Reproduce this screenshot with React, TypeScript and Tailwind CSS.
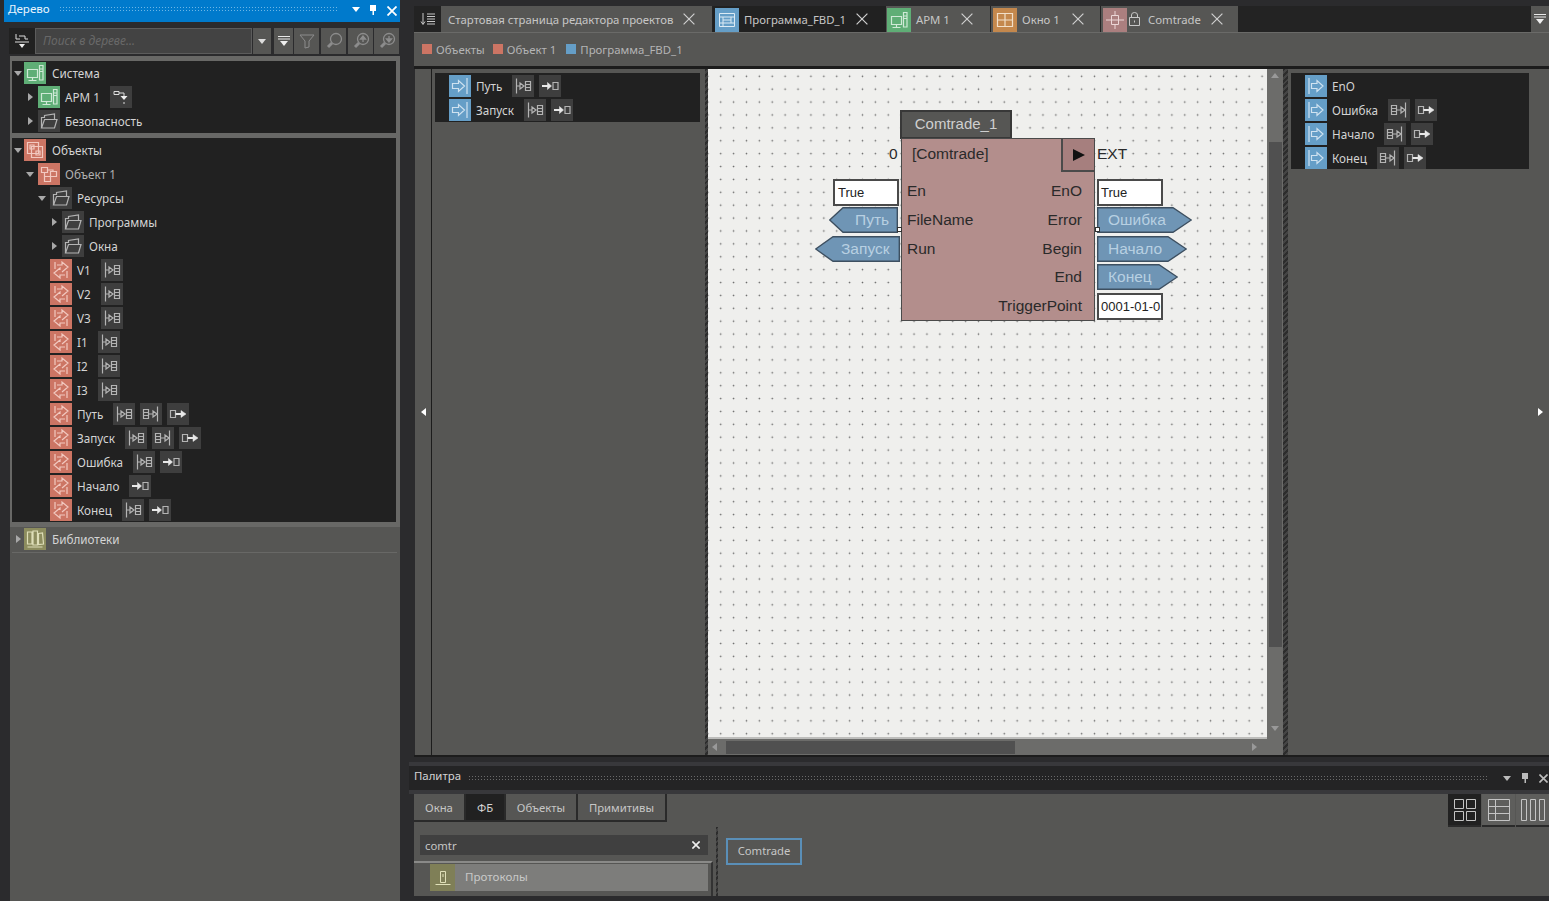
import React from "react";

const P = ({ c = "#b4b4b4", w = 1.2, children, s = 22 }: { c?: string; w?: number; children: React.ReactNode; s?: number }) => (
  <svg width={s} height={s} viewBox="0 0 22 22" fill="none" stroke={c} strokeWidth={w}>{children}</svg>
);
const InTag = () => (<P><path d="M4.5 3.5v15M4.5 11H8M8 8l4 3-4 3zM13.5 6.5h5v9h-5zM13.5 9.5h5M13.5 12.5h5" /></P>);
const OutTag = () => (<P><path d="M17.5 3.5v15M9 11h4M13 8l4 3-4 3zM3.5 6.5h5v9h-5zM3.5 9.5h5M3.5 12.5h5" /></P>);
const ArrowBox = () => (<P><path d="M14 7.5h5v7h-5z" /><path d="M3 11h7" stroke="#e8e8e8" strokeWidth={2} /><path d="M8.5 7.5l4 3.5-4 3.5z" fill="#e8e8e8" stroke="#e8e8e8" strokeWidth={0.5} /></P>);
const BoxArrow = () => (<P><path d="M3.5 7.5h5v7h-5z" /><path d="M8.5 11h6" stroke="#e8e8e8" strokeWidth={2} /><path d="M14 7.5l5 3.5-5 3.5z" fill="#e8e8e8" stroke="#e8e8e8" strokeWidth={0.5} /></P>);
const Folder = () => (<P><path d="M3.5 18V7.5h3V5.5l10-1.500v5" /><path d="M3.5 18h13l2.500-8.500H6.500z" /></P>);
const VarI = () => (<P c="#f2c9c0"><path d="M5 3v7M7 6h5V3l6 5-6 5M17 12v7M15 16h-5v3l-6-5 6-5v2" /></P>);
const SysI = ({ c = "#cfe9d6" }: { c?: string }) => (<P c={c}><path d="M3.500 7.500h10v8h-10zM8.500 15.500v2.500M4.500 18.500h8M15.500 3.500h3.500v14.500h-3.500zM15.500 7h3.500M15.500 9.500h3.500" /></P>);
const ObjsI = () => (<P c="#f2c9c0"><path d="M3.500 3.500h11v11h-11zM7.500 7.500h11v11h-11zM6 6h4v4H6zM12 12h4v4h-4z" /></P>);
const ObjI = () => (<P c="#f2c9c0"><path d="M3.500 4.500h6v5h-6zM12.500 8.500h6v5h-6zM6.500 13.500h6v5h-6zM9.500 7h5.500v1.500M6.500 9.500v4" /></P>);
const LibI = () => (<P c="#dedeb8"><path d="M3.500 4h4.500v12H3.500zM9 3h4.500v14H9zM14.500 5.500l4-.5 1 11-5 .5zM3.500 19h15" /></P>);
const BlueIn = () => (<P c="#cfe2f0"><path d="M3.500 8.500h6v-3l6 5.500-6 5.500v-3h-6zM18 3v16" /></P>);
const BlueOut = () => (<P c="#cfe2f0"><path d="M4 3v16M6.500 8.500h5.500v-3l6 5.500-6 5.500v-3H6.500z" /></P>);
const Dn = ({ c = "#c8c8c8" }: { c?: string }) => (<svg width="8" height="5" viewBox="0 0 8 5"><path d="M0 0h8L4 5z" fill={c} /></svg>);
const Rt = ({ c = "#b8b8b8" }: { c?: string }) => (<svg width="5" height="8" viewBox="0 0 5 8"><path d="M0 0v8l5-4z" fill={c} /></svg>);
const Pin = ({ c = "#fff" }: { c?: string }) => (<svg width="8" height="10" viewBox="0 0 8 10"><path d="M1 0h6v6H5v4H3.500V6H1z" fill={c} /></svg>);
const Close = ({ c = "#fff", s = 10, w = 1.800 }: { c?: string; s?: number; w?: number }) => (<svg width={s} height={s} viewBox="0 0 10 10" stroke={c} strokeWidth={w}><path d="M0.500 0.500l9 9M9.500 0.500l-9 9" /></svg>);
const CollapseAll = () => (<svg width="14" height="12" viewBox="0 0 14 12"><path d="M1 1.500h12M1 4h12" stroke="#e8e8e8" strokeWidth="1.200" /><path d="M3 6h8L7 11z" fill="#eee" /></svg>);

const Chip = ({ children }: { children: React.ReactNode }) => (<div className="w-[22px] h-[22px] bg-[#3e3e3e] flex items-center justify-center shrink-0">{children}</div>);
const Ico = ({ bg, children }: { bg: string; children: React.ReactNode }) => (<div className={`w-[22px] h-[22px] flex items-center justify-center shrink-0 ${bg}`}>{children}</div>);

type RowProps = { indent: string; caret?: "d" | "r"; icon: React.ReactNode; label: string; chips?: React.ReactNode[]; dim?: boolean; top?: boolean };
const Row = ({ indent, caret, icon, label, chips = [], dim, top }: RowProps) => (
  <div className={`h-[24px] flex items-center ${indent}`}>
    <div className={`w-[12px] -ml-[12px] flex shrink-0 ${top ? "justify-center" : caret === "r" ? "justify-start pl-[2px]" : "justify-start"}`}>{caret === "d" ? <Dn c="#a8a8a8" /> : caret === "r" ? <Rt c="#a8a8a8" /> : null}</div>
    {icon}
    <span className={`${top ? "ml-[6px]" : "ml-[5px]"} pt-[2px] text-[11.7px] whitespace-nowrap ${dim ? "text-[#b0b0b0]" : "text-[#d4d4d4]"}`}>{label}</span>
    <div className="flex gap-[5px] ml-[10px]">{chips.map((c, i) => <Chip key={i}>{c}</Chip>)}</div>
  </div>
);
const red = (i: React.ReactNode) => <Ico bg="bg-[#cc7564]">{i}</Ico>;
const gray = (i: React.ReactNode) => <Ico bg="bg-[#3e3e3e]">{i}</Ico>;
const L3 = "pl-[38px]";

const TB = ({ children, bg = "bg-[#565654]", w }: { children: React.ReactNode; bg?: string; w: string }) => (
  <div className={`h-[26px] flex items-center justify-center shrink-0 ${bg} ${w}`}>{children}</div>
);

const Left = () => (
  <div className="w-[400px] shrink-0 flex flex-col">
    <div className="ml-[4px] h-[22px] bg-[#007acc] flex items-center text-[12px] text-[#e8f4fc]">
      <span className="ml-[4px] -mt-[4px] w-[41px] text-[11.6px] whitespace-nowrap">Дерево</span>
      <div className="ml-[10px] w-[278px] h-[7px] -mt-[3px] bg-[radial-gradient(#6db6e6_0.7px,transparent_0.9px)] bg-[length:3px_3px]" />
      <div className="ml-[15px] -mt-[3px]"><Dn c="#fff" /></div>
      <div className="ml-[9px] -mt-[3px]"><Pin /></div>
      <div className="ml-[10px]"><Close /></div>
    </div>
    <div className="flex mt-[6px] h-[26px] pl-[9px]">
      <TB w="w-[26px]" bg="bg-[#212121]"><svg width="16" height="16" viewBox="0 0 16 16" stroke="#ddd" fill="none"><path d="M2 1v5h4M5 3h6v3h3" /><path d="M1 9h14" /><path d="M5 11h6l-3 4z" fill="#eee" stroke="none" /></svg></TB>
      <div className="w-[217px] h-[26px] bg-[#434343] border border-[#5c5c5c] flex items-center pl-[7px] text-[12px] italic text-[#686868] shrink-0">Поиск в дереве...</div>
      <TB w="w-[18px] ml-[1px]"><Dn c="#ddd" /></TB>
      <TB w="w-[19px] ml-[3px]"><CollapseAll /></TB>
      <TB w="w-[25px] ml-[1px]"><svg width="16" height="16" viewBox="0 0 16 16" fill="none" stroke="#8c8c8c"><path d="M1 2h14L10 8v6l-4 1V8z" /></svg></TB>
      <TB w="w-[25px] ml-[2px]"><svg width="18" height="18" viewBox="0 0 18 18" fill="none" stroke="#8c8c8c" strokeWidth="1.300"><circle cx="11" cy="7" r="5.500" /><path d="M7 11l-4 4" strokeWidth="3" /></svg></TB>
      <TB w="w-[25px] ml-[2px]"><svg width="18" height="18" viewBox="0 0 18 18" fill="none" stroke="#8c8c8c" strokeWidth="1.300"><circle cx="11" cy="7" r="5.500" /><path d="M7 11l-4 4" strokeWidth="3" /><path d="M11 4l-2.500 3h5zM11 6v4" fill="#999" /></svg></TB>
      <TB w="w-[25px] ml-[1px]"><svg width="18" height="18" viewBox="0 0 18 18" fill="none" stroke="#8c8c8c" strokeWidth="1.300"><circle cx="11" cy="7" r="5.500" /><path d="M7 11l-4 4" strokeWidth="3" /><path d="M11 10l-2.500-3h5zM11 8V4" fill="#999" /></svg></TB>
    </div>
    <div className="mt-[2px] ml-[10px] flex-1 bg-[#565654] flex flex-col">
      <div className="bg-[#686866] pt-[5px] pl-[2px] pb-[5px] pr-[4px]">
        <div className="bg-[#212121] h-[72px]">
          <Row top indent="pl-[12px]" caret="d" icon={<Ico bg="bg-[#5fae76]"><SysI /></Ico>} label="Система" />
          <Row indent="pl-[26px]" caret="r" icon={<Ico bg="bg-[#5fae76]"><SysI /></Ico>} label="АРМ 1" chips={[<svg key="a" width="18" height="18" viewBox="0 0 18 18" fill="none" stroke="#ddd"><path d="M2 3.500h5v3H2zM7 5h5v3" /><path d="M8.500 8h7l-3.500 4z" fill="#eee" stroke="none" /><path d="M12 14v2" /></svg>]} />
          <Row indent="pl-[26px]" caret="r" icon={gray(<Folder />)} label="Безопасность" />
        </div>
        <div className="bg-[#212121] h-[384px] mt-[5px] overflow-hidden">
          <Row top indent="pl-[12px]" caret="d" icon={red(<ObjsI />)} label="Объекты" />
          <Row indent="pl-[26px]" caret="d" icon={red(<ObjI />)} label="Объект 1" dim />
          <Row indent={L3} caret="d" icon={gray(<Folder />)} label="Ресурсы" />
          <Row indent="pl-[50px]" caret="r" icon={gray(<Folder />)} label="Программы" />
          <Row indent="pl-[50px]" caret="r" icon={gray(<Folder />)} label="Окна" />
          <Row indent={L3} icon={red(<VarI />)} label="V1" chips={[<InTag key="a" />]} />
          <Row indent={L3} icon={red(<VarI />)} label="V2" chips={[<InTag key="a" />]} />
          <Row indent={L3} icon={red(<VarI />)} label="V3" chips={[<InTag key="a" />]} />
          <Row indent={L3} icon={red(<VarI />)} label="I1" chips={[<InTag key="a" />]} />
          <Row indent={L3} icon={red(<VarI />)} label="I2" chips={[<InTag key="a" />]} />
          <Row indent={L3} icon={red(<VarI />)} label="I3" chips={[<InTag key="a" />]} />
          <Row indent={L3} icon={red(<VarI />)} label="Путь" chips={[<InTag key="a" />, <OutTag key="b" />, <BoxArrow key="c" />]} />
          <Row indent={L3} icon={red(<VarI />)} label="Запуск" chips={[<InTag key="a" />, <OutTag key="b" />, <BoxArrow key="c" />]} />
          <Row indent={L3} icon={red(<VarI />)} label="Ошибка" chips={[<InTag key="a" />, <ArrowBox key="b" />]} />
          <Row indent={L3} icon={red(<VarI />)} label="Начало" chips={[<ArrowBox key="b" />]} />
          <Row indent={L3} icon={red(<VarI />)} label="Конец" chips={[<InTag key="a" />, <ArrowBox key="b" />]} />
        </div>
      </div>
      <div className="ml-[2px] mr-[3px] border-b border-[#686866] pb-[1px] -mt-[5px] pt-[5px]">
        <Row top indent="pl-[12px]" caret="r" icon={<Ico bg="bg-[#8c8c5e]"><LibI /></Ico>} label="Библиотеки" />
      </div>
    </div>
  </div>
);

const Tab = ({ icon, label, width, active, lock, mr = "mr-[17px]", iconMl = "ml-[2px]" }: { icon?: React.ReactNode; label: string; width: string; active?: boolean; lock?: boolean; mr?: string; iconMl?: string }) => (
  <div className={`h-[26px] flex items-center shrink-0 ${width} ${active ? "bg-[#212121]" : "bg-[#565654]"}`}>
    {icon ? <div className={`${iconMl} self-end`}>{icon}</div> : <div className="w-[7px]" />}
    {lock && <svg className="ml-[2px]" width="11" height="14" viewBox="0 0 11 14" fill="none" stroke="#c8c8c8"><path d="M.500 5.500h10v8H.500zM2.500 5.500V3a3 2.500 0 0 1 6 0v2.500M5.500 8.500v2" /></svg>}
    <span className={`${lock ? "ml-[8px]" : icon ? "ml-[5px]" : ""} pt-[2px] text-[11.35px] text-[#c6c6c6] whitespace-nowrap`}>{label}</span>
    <div className={`ml-auto ${mr}`}><Close c="#cfcfcf" s={12} w={1} /></div>
  </div>
);
const TabIco = ({ bg, children }: { bg: string; children: React.ReactNode }) => (<div className={`w-[24px] h-[24px] flex items-center justify-center ${bg}`}>{children}</div>);

const Crumb = ({ c, label, ml }: { c: string; label: string; ml: string }) => (
  <div className={`flex items-center ${ml}`}><div className={`w-[10px] h-[10px] ${c}`} /><span className="ml-[4px] text-[11.4px] text-[#b4b4b4] whitespace-nowrap">{label}</span></div>
);

const Box = ({ cls, text }: { cls: string; text: string }) => (
  <div className={`absolute h-[27px] bg-white border-2 border-[#4a4a4a] flex items-center text-[13px] text-[#222] overflow-hidden whitespace-nowrap ${cls}`}>{text}</div>
);
const Tag = ({ x, y, w, tip, left, label, textX }: { x: number; y: number; w: number; tip: number; left?: boolean; label: string; textX: number }) => {
  const pts = left
    ? `0.700,13 ${tip},0.700 ${w - 0.7},0.700 ${w - 0.7},25.300 ${tip},25.300`
    : `0.700,0.700 ${w - tip},0.700 ${w - 0.7},13 ${w - tip},25.300 0.700,25.300`;
  return (
    <svg className="absolute" style={{ left: x, top: y }} width={w} height={26}>
      <polygon points={pts} fill="#6f95b5" stroke="#3d4f60" strokeWidth="1.400" />
      <text x={textX} y={17.8} fontSize="15.500" fill="#b8d0e2" fontFamily="'Liberation Sans',Arial,sans-serif">{label}</text>
    </svg>
  );
};

const Canvas = () => (
  <div className="relative w-[559px] h-[670px] bg-[#efefed] bg-[radial-gradient(circle,#666_0.7px,transparent_1.1px)] bg-[length:12.9px_12.9px] bg-[position:6.25px_0.85px] border-b-2 border-[#bdbdbb] font-['Liberation_Sans',Arial,sans-serif] text-[15.5px] text-[#2a2a2a] overflow-hidden">
    <div className="absolute left-[192px] top-[41px] w-[112px] h-[29px] bg-[#565654] border-2 border-[#383838] flex items-center justify-center text-[15px] text-[#cfcfcf]">Comtrade_1</div>
    <div className="absolute left-[193px] top-[69px] w-[194px] h-[183px] bg-[#b38e8c] border border-[#4a4a4a]">
      <div className="absolute right-0 top-0 w-[33px] h-[33px] bg-[#a67f7e] border-l-2 border-b-2 border-[#4a4a4a] flex items-center justify-center">
        <svg width="12" height="12" viewBox="0 0 12 12"><path d="M0 0v12l12-6z" fill="#111" /></svg>
      </div>
      <span className="absolute left-[10px] top-[3px]">[Comtrade]</span>
      <span className="absolute left-[5px] top-[40px]">En</span>
      <span className="absolute left-[5px] top-[69px]">FileName</span>
      <span className="absolute left-[5px] top-[98px]">Run</span>
      <span className="absolute right-[12px] top-[40px]">EnO</span>
      <span className="absolute right-[12px] top-[69px]">Error</span>
      <span className="absolute right-[12px] top-[98px]">Begin</span>
      <span className="absolute right-[12px] top-[126px]">End</span>
      <span className="absolute right-[12px] top-[155px]">TriggerPoint</span>
    </div>
    <span className="absolute left-[181px] top-[73px]">0</span>
    <span className="absolute left-[389px] top-[73px]">EXT</span>
    <Box cls="left-[125px] top-[110px] w-[66px] pl-[3px]" text="True" />
    <Box cls="left-[389px] top-[110px] w-[66px] pl-[2px]" text="True" />
    <Box cls="left-[389px] top-[224px] w-[66px] pl-[2px]" text="0001-01-0" />
    <Tag x={121} y={138} w={69} tip={14} left label="Путь" textX={26} />
    <Tag x={107} y={167} w={85} tip={18} left label="Запуск" textX={26} />
    <Tag x={389} y={138} w={95} tip={19} label="Ошибка" textX={11} />
    <Tag x={389} y={167} w={90} tip={19} label="Начало" textX={11} />
    <Tag x={389} y={195} w={81} tip={19} label="Конец" textX={11} />
    <div className="absolute left-[189px] top-[158px] w-[5px] h-[5px] bg-white border border-[#333]" />
    <div className="absolute left-[387px] top-[158px] w-[5px] h-[5px] bg-white border border-[#333]" />
  </div>
);

const ListRow = ({ icon, label, chips = [] }: { icon: React.ReactNode; label: string; chips?: React.ReactNode[] }) => (
  <div className="h-[24px] flex items-center pl-[14px]">
    <Ico bg="bg-[#659ec7]">{icon}</Ico>
    <span className="ml-[5px] pt-[2px] text-[11.7px] text-[#d4d4d4] whitespace-nowrap">{label}</span>
    <div className="flex gap-[5px] ml-[10px]">{chips.map((c, i) => <Chip key={i}>{c}</Chip>)}</div>
  </div>
);

const Hatch = ({ w }: { w: string }) => (<div className={`${w} shrink-0 bg-[repeating-linear-gradient(135deg,#2c2c2c_0px,#2c2c2c_2px,#444_2px,#444_4px)]`} />);

const Main = () => (
  <div className="h-[757px] pl-[5px] flex flex-col">
    <div className="h-[6px]" />
    <div className="h-[26px] bg-[#232323] flex items-stretch pl-[1px]">
      <div className="w-[25px] flex items-center justify-center shrink-0">
        <svg width="16" height="16" viewBox="0 0 16 16" fill="none" stroke="#c8c8c8"><path d="M3 2v11M1 10.500l2 3 2-3M7 3h8M7 5.500h8M7 8h8M7 10.500h8M7 13h8" /></svg>
      </div>
      <div className="w-[1px]" />
      <Tab label="Стартовая страница редактора проектов" width="w-[271px]" />
      <div className="w-[1px]" />
      <Tab active icon={<TabIco bg="bg-[#659ec7]"><svg width="18" height="18" viewBox="0 0 18 18" fill="none" stroke="#dcebf5"><path d="M1.500 2.500h15v13h-15zM1.500 6h15M1.500 12h15M5 6v9.500M5 9h8M13 6v6" /></svg></TabIco>} label="Программа_FBD_1" width="w-[173px]" mr="mr-[18px]" />
      <Tab iconMl="ml-[1px]" icon={<TabIco bg="bg-[#5fae76]"><SysI /></TabIco>} label="АРМ 1" width="w-[104px]" />
      <div className="w-[1px]" />
      <Tab icon={<TabIco bg="bg-[#c4884d]"><svg width="18" height="18" viewBox="0 0 18 18" fill="none" stroke="#f1dfc9" strokeWidth="1.200"><path d="M1.500 2.500h15v13h-15zM9 2.500v13M1.500 9h15" /></svg></TabIco>} label="Окно 1" width="w-[109px]" mr="mr-[16px]" />
      <div className="w-[1px]" />
      <Tab lock icon={<TabIco bg="bg-[#ab7f7f]"><svg width="18" height="18" viewBox="0 0 18 18" fill="none" stroke="#ecd7d7"><path d="M5.500 4.500h7v9h-7zM0 9h18M9 0v4.500M9 13.500V18" /></svg></TabIco>} label="Comtrade" width="w-[137px]" mr="mr-[15px]" />
      <div className="flex-1" />
      <div className="w-[18px] bg-[#565654] flex items-center justify-center"><CollapseAll /></div>
    </div>
    <div className="h-[34px] bg-[#565654] flex items-center pl-[8px] border-t border-[#6a6a68]">
      <Crumb c="bg-[#cc7564]" label="Объекты" ml="" />
      <Crumb c="bg-[#cc7564]" label="Объект 1" ml="ml-[8px]" />
      <Crumb c="bg-[#659ec7]" label="Программа_FBD_1" ml="ml-[10px]" />
    </div>
    <div className="h-[3px] bg-[#1c1c1c]" />
    <div className="flex-1 flex pl-[1px] border-b-2 border-[#1c1c1c]">
      <div className="w-[16px] bg-[#565654] flex items-center justify-center"><div className="rotate-180"><Rt c="#fff" /></div></div>
      <div className="w-[1px] bg-[#1c1c1c]" />
      <div className="w-[273px] bg-[#565654] pt-[4px] px-[3px]">
        <div className="bg-[#212121] h-[49px] w-[265px] pt-[1px]">
          <ListRow icon={<BlueIn />} label="Путь" chips={[<InTag key="a" />, <ArrowBox key="b" />]} />
          <ListRow icon={<BlueIn />} label="Запуск" chips={[<InTag key="a" />, <ArrowBox key="b" />]} />
        </div>
      </div>
      <Hatch w="w-[3px]" />
      <div className="w-[575px] flex flex-col">
        <div className="flex">
          <Canvas />
          <div className="w-[16px] h-[670px] bg-[#6c6c6a] flex flex-col items-center">
            <div className="h-[14px] flex items-center rotate-180"><Dn c="#999" /></div>
            <div className="mt-[59px] w-[13px] h-[505px] bg-[#505050]" />
            <div className="mt-auto mb-[4px] h-[14px] flex items-center"><Dn c="#999" /></div>
          </div>
        </div>
        <div className="flex-1 bg-[#6c6c6a] flex items-center pl-[4px] pr-[26px]">
          <div className="rotate-180"><Rt c="#999" /></div>
          <div className="ml-[9px] w-[289px] h-[13px] bg-[#505050]" />
          <div className="ml-auto"><Rt c="#999" /></div>
        </div>
      </div>
      <Hatch w="w-[5px]" />
      <div className="flex-1 bg-[#565654] flex pt-[4px] pl-[3px]">
        <div className="bg-[#212121] h-[96px] w-[238px] pt-[1px] shrink-0">
          <ListRow icon={<BlueOut />} label="EnO" />
          <ListRow icon={<BlueOut />} label="Ошибка" chips={[<OutTag key="a" />, <BoxArrow key="b" />]} />
          <ListRow icon={<BlueOut />} label="Начало" chips={[<OutTag key="a" />, <BoxArrow key="b" />]} />
          <ListRow icon={<BlueOut />} label="Конец" chips={[<OutTag key="a" />, <BoxArrow key="b" />]} />
        </div>
        <div className="flex-1 flex items-start justify-end pr-[6px] pt-[335px]"><Rt c="#fff" /></div>
      </div>
    </div>
  </div>
);

const PTab = ({ label, w, active }: { label: string; w: string; active?: boolean }) => (
  <div className={`h-[28px] ${w} flex items-center justify-center text-[11.3px] pt-[2px] shrink-0 border-r-2 border-b-2 border-[#2a2a2a] ${active ? "bg-[#212121] text-[#d4d4d4]" : "bg-[#565654] text-[#c6c6c6]"}`}>{label}</div>
);
const ViewBtn = ({ w, active, children }: { w: string; active?: boolean; children: React.ReactNode }) => (
  <div className={`h-[33px] ${w} flex items-center justify-center shrink-0 border-b-2 border-[#2a2a2a] ${active ? "bg-[#212121]" : "bg-[#5e5e5c]"}`}>{children}</div>
);

const Palette = () => (
  <div className="flex-1 flex flex-col">
    <div className="h-[5px]" />
    <div className="h-[4px] bg-[#38383b]" />
    <div className="h-[24px] bg-[#242425] flex items-center text-[11.4px] text-[#d4d4d4]">
      <span className="ml-[5px] -mt-[5px] w-[46px] whitespace-nowrap">Палитра</span>
      <div className="ml-[8px] w-[1019px] h-[7px] bg-[radial-gradient(#6a6a6a_0.7px,transparent_0.9px)] bg-[length:3px_3px]" />
      <div className="ml-[16px]"><Dn c="#bbb" /></div>
      <div className="ml-[10px]"><Pin c="#bbb" /></div>
      <div className="ml-[10px]"><Close c="#bbb" s={9} /></div>
    </div>
    <div className="h-[4px] bg-[#38383b]" />
    <div className="h-[102px] bg-[#565654] ml-[5px] flex flex-col">
      <div className="h-[33px] flex items-start">
        <PTab label="Окна" w="w-[52px]" />
        <PTab label="ФБ" w="w-[40px]" active />
        <PTab label="Объекты" w="w-[72px]" />
        <PTab label="Примитивы" w="w-[89px]" />
        <div className="flex-1" />
        <ViewBtn w="w-[33px]" active><svg width="24" height="24" viewBox="0 0 24 24" fill="none" stroke="#c4c4c4"><path d="M1.500 1.500h9v9h-9zM13.500 1.500h9v9h-9zM1.500 13.500h9v9h-9zM13.500 13.500h9v9h-9z" /></svg></ViewBtn>
        <div className="w-[1px]" />
        <ViewBtn w="w-[33px]"><svg width="24" height="24" viewBox="0 0 24 24" fill="none" stroke="#c4c4c4"><path d="M1.500 1.500h21v21h-21zM1.500 8.500h21M1.500 15.500h21M8.500 1.500v21" /></svg></ViewBtn>
        <div className="w-[1px]" />
        <ViewBtn w="w-[33px]"><svg width="26" height="24" viewBox="0 0 26 24" fill="none" stroke="#c4c4c4"><path d="M1.500 1.500h5v21h-5zM10.500 1.500h5v21h-5zM19.500 1.500h5v21h-5z" /></svg></ViewBtn>
      </div>
      <div className="flex flex-1">
        <div className="w-[299px] flex flex-col">
          <div className="ml-[6px] mt-[8px] w-[288px] h-[20px] bg-[#404040] flex items-center pl-[5px] pr-[8px] justify-between text-[11.3px] text-[#c6c6c6]">
            <span className="pt-[2px]">comtr</span><Close c="#eee" s={8} w={2} />
          </div>
          <div className="mt-[6px] flex-1 border-t-2 border-[#8a8a88] border-r-2 border-r-[#333] pt-[1px] pl-[16px] pr-[3px]">
            <div className="h-[27px] bg-[#7d7d7b] flex items-center text-[11.6px] text-[#c8c8c8]">
              <div className="w-[25px] h-[27px] bg-[#7f7f57] flex items-center justify-center"><svg width="18" height="18" viewBox="0 0 18 18" fill="none" stroke="#e0e0b8"><path d="M6.500 2.500h5v11h-5zM1.500 15.500h15M9 5v3" /></svg></div>
              <span className="ml-[10px] pb-[2px]">Протоколы</span>
            </div>
          </div>
        </div>
        <div className="ml-[3px] w-[2px] bg-[repeating-linear-gradient(135deg,#2c2c2c_0px,#2c2c2c_2px,#444_2px,#444_4px)]" />
        <div className="ml-[8px] mt-[11px] w-[76px] h-[27px] border-2 border-[#5a8fb8] flex items-center justify-center text-[11.3px] text-[#c6c6c6]">Comtrade</div>
      </div>
    </div>
    <div className="flex-1" />
  </div>
);

export default function App() {
  return (
    <div className="w-[1549px] h-[901px] flex bg-[#2b2b2d] overflow-hidden font-['Noto_Sans',sans-serif]">
      <Left />
      <div className="w-[9px] shrink-0" />
      <div className="w-[1140px] shrink-0 flex flex-col">
        <Main />
        <Palette />
      </div>
    </div>
  );
}
